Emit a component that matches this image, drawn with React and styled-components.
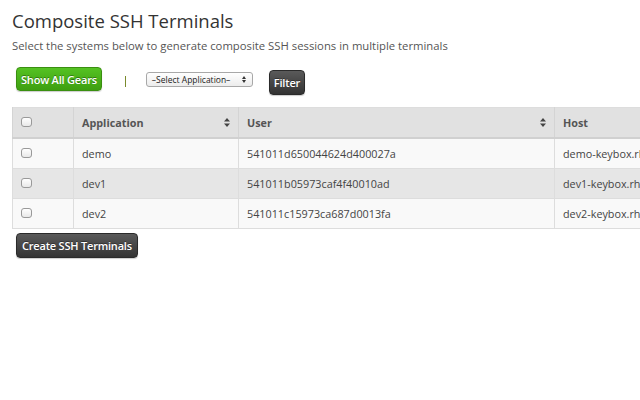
import React from 'react';
import styled, { createGlobalStyle } from 'styled-components';

const GlobalStyle = createGlobalStyle`
  html, body {
    margin: 0;
    padding: 0;
    background: #fff;
    overflow: hidden;
  }
  body {
    font-family: "Open Sans", "DejaVu Sans", sans-serif;
    color: #333;
  }
`;

const Page = styled.div`
  width: 640px;
  height: 400px;
  overflow: hidden;
  padding: 0 0 0 12px;
  box-sizing: border-box;
`;

const Title = styled.h2`
  margin: 0;
  padding-top: 6px;
  font-size: 18.5px;
  font-weight: 400;
  line-height: 30px;
  color: #333;
`;

const Lead = styled.p`
  margin: 2px 0 0;
  font-size: 11.3px;
  line-height: 16px;
  color: #555;
`;

const Toolbar = styled.div`
  display: flex;
  align-items: center;
  margin-top: 13px;
  padding-left: 4px;
  height: 28px;
`;

const Button = styled.button`
  font-family: "Open Sans", "DejaVu Sans", sans-serif;
  font-size: 11px;
  font-weight: 600;
  letter-spacing: -0.2px;
  color: #fff;
  text-shadow: 0 -1px 0 rgba(0, 0, 0, 0.35);
  border: 1px solid ${p => (p.$green ? '#3a8f10' : '#2a2a2a')};
  border-radius: 4px;
  padding: 0 ${p => p.$pad || 4}px;
  height: ${p => p.$h || 24}px;
  background: ${p =>
    p.$green
      ? 'linear-gradient(#55c223, #3e9f10)'
      : 'linear-gradient(#5a5a5a, #333)'};
  box-shadow: 0 1px 1px rgba(0, 0, 0, 0.2);
  cursor: pointer;
  white-space: nowrap;
  margin-top: ${p => p.$mt || 0}px;
  margin-left: ${p => p.$ml || 0}px;
`;

const Divider = styled.span`
  display: inline-block;
  width: 1px;
  height: 11px;
  background: #7a8a2c;
  margin: 0 20px 0 23px;
`;

const SelectBox = styled.div`
  position: relative;
  width: 107px;
  height: 15px;
  box-sizing: border-box;
  border: 1px solid #a8a8a8;
  border-radius: 3px;
  background: linear-gradient(#fff, #ececec);
  font-size: 8.5px;
  color: #222;
  line-height: 13px;
  padding-left: 5px;
  margin-right: 16px;
  margin-top: -3px;
`;

const SelectArrows = styled.span`
  position: absolute;
  right: 6px;
  top: 3px;
  display: flex;
  flex-direction: column;
  gap: 1px;
`;

const Tri = styled.span`
  width: 0;
  height: 0;
  border-left: 2px solid transparent;
  border-right: 2px solid transparent;
  ${p => (p.$up ? 'border-bottom: 3px solid #333;' : 'border-top: 3px solid #333;')}
`;

const Table = styled.table`
  margin-top: 12px;
  width: 760px;
  border-collapse: collapse;
  border: 1px solid #ddd;
  font-size: 10.8px;
`;

const Th = styled.th`
  height: 30px;
  text-align: left;
  font-weight: 700;
  color: #555;
  background: #e1e1e1;
  border-left: 1px solid #d4d4d4;
  border-bottom: 2px solid #d0d0d0;
  padding: 0 8px;
  width: ${p => p.$w || 'auto'};
  box-sizing: border-box;
`;

const ThInner = styled.div`
  display: flex;
  align-items: center;
  justify-content: space-between;
`;

const Td = styled.td`
  height: 29px;
  padding: 0 8px;
  color: #444;
  border-left: 1px solid #ddd;
  border-top: 1px solid #ddd;
  background: ${p => (p.$alt ? '#e6e6e6' : '#f9f9f9')};
  white-space: nowrap;
`;

const Box = styled.span`
  display: block;
  width: 9px;
  height: 8px;
  border: 1px solid #999;
  border-radius: 3px;
  background: linear-gradient(#fff, #e8e8e8);
`;

const SortIcon = () => (
  <svg width="6" height="9" viewBox="0 0 6 9">
    <path d="M3 0 L6 3.5 L0 3.5 Z M0 5.5 L6 5.5 L3 9 Z" fill="#444" />
  </svg>
);

const rows = [
  { app: 'demo', user: '541011d650044624d400027a', host: 'demo-keybox.rhcloud.com' },
  { app: 'dev1', user: '541011b05973caf4f40010ad', host: 'dev1-keybox.rhcloud.com' },
  { app: 'dev2', user: '541011c15973ca687d0013fa', host: 'dev2-keybox.rhcloud.com' },
];

export default function App() {
  return (
    <Page>
      <GlobalStyle />
      <Title>Composite SSH Terminals</Title>
      <Lead>Select the systems below to generate composite SSH sessions in multiple terminals</Lead>
      <Toolbar>
        <Button $green $h={24} $mt={-4}>Show All Gears</Button>
        <Divider />
        <SelectBox>
          –Select Application–
          <SelectArrows>
            <Tri $up />
            <Tri />
          </SelectArrows>
        </SelectBox>
        <Button $h={25} $mt={2}>Filter</Button>
      </Toolbar>
      <Table>
        <thead>
          <tr>
            <Th $w="61px"><Box /></Th>
            <Th $w="165px">
              <ThInner>Application <SortIcon /></ThInner>
            </Th>
            <Th $w="316px">
              <ThInner>User <SortIcon /></ThInner>
            </Th>
            <Th>Host</Th>
          </tr>
        </thead>
        <tbody>
          {rows.map((r, i) => (
            <tr key={r.app}>
              <Td $alt={i === 1}><Box /></Td>
              <Td $alt={i === 1}>{r.app}</Td>
              <Td $alt={i === 1}>{r.user}</Td>
              <Td $alt={i === 1}>{r.host}</Td>
            </tr>
          ))}
        </tbody>
      </Table>
      <Button $h={25} $pad={5} $mt={4} $ml={4}>Create SSH Terminals</Button>
    </Page>
  );
}
